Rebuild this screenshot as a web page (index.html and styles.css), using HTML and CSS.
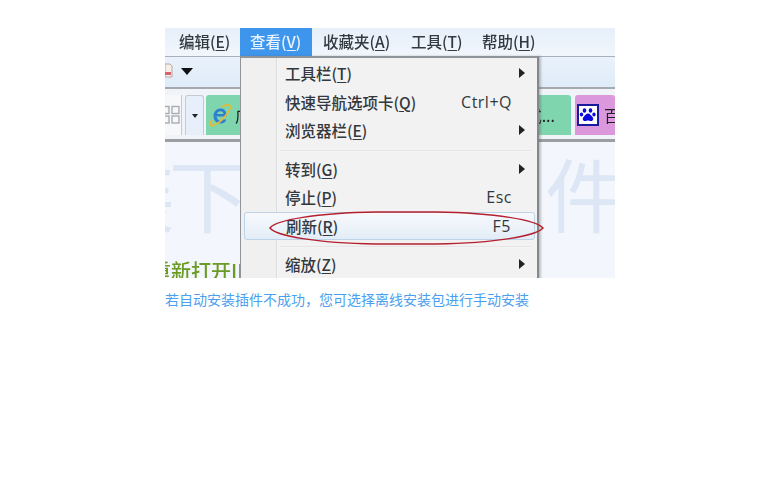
FILE: index.html
```html
<!DOCTYPE html>
<html lang="zh-CN">
<head>
<meta charset="utf-8">
<title>刷新</title>
<link rel="stylesheet" href="styles.css">
</head>
<body>
<main class="wrap">
  <figure class="shot">
    <div class="browser">
      <nav class="menubar">
        <span class="mi mi-edit">编辑(<u>E</u>)</span>
        <span class="mi mi-view">查看(<u>V</u>)</span>
        <span class="mi mi-fav">收藏夹(<u>A</u>)</span>
        <span class="mi mi-tools">工具(<u>T</u>)</span>
        <span class="mi mi-help">帮助(<u>H</u>)</span>
      </nav>
      <div class="toolbar">
        <svg class="printer" width="8" height="18" viewBox="0 0 8 18"><path d="M0 3h5l2 2v11H0z" fill="#f4efe9" stroke="#b9a7a0"/><path d="M0 11h6v3H0z" fill="#d9626f"/></svg>
        <span class="tool-arrow"></span>
      </div>
      <div class="tabbar">
        <div class="grid-btn"><svg width="15" height="20" viewBox="0 0 15 20"><g fill="none" stroke="#a9adb3" stroke-width="1.4"><rect x="-3" y="1.5" width="7" height="7"/><rect x="-3" y="11" width="7" height="7"/><rect x="7" y="1.5" width="7" height="7"/><rect x="7" y="11" width="7" height="7"/></g></svg></div>
        <div class="drop-btn"><span class="drop-arrow"></span></div>
        <div class="tab tab-green">
          <svg class="ie" width="23" height="24" viewBox="0 0 23 24"><path d="M5 13.500h12.500C18 8 15 5.500 11.500 5.500 7.500 5.500 4.500 9 4.500 13c0 4.500 3 7.500 7 7.500 3 0 5-1.500 6-4h-3.500c-.5 1-1.300 1.400-2.500 1.400-2 0-3.500-1.600-3.500-3.900zM8 11c.2-1.700 1.600-2.800 3.400-2.800 1.800 0 3 1.100 3.200 2.800z" fill="#2f7fd0"/><path d="M3 17C0 21 1 23 3.500 22.500c4-1 10-5.500 14-11C21 7 22.500 3 20 2c-2-.7-5 .5-7.500 2" fill="none" stroke="#e3b93a" stroke-width="1.800"/></svg>
          <span class="tab-text">广</span>
          <span class="tab-end">式...</span>
        </div>
        <div class="tab tab-purple">
          <svg class="paw" width="22" height="22" viewBox="0 0 22 22"><rect x="1" y="1" width="20" height="20" fill="#fff" stroke="#1a1a9c" stroke-width="2"/><g fill="#0a0ae0"><ellipse cx="7.500" cy="6.500" rx="1.800" ry="2.300"/><ellipse cx="13.500" cy="6.500" rx="1.800" ry="2.300"/><ellipse cx="4.500" cy="10.500" rx="1.700" ry="2"/><ellipse cx="17" cy="10.500" rx="1.700" ry="2"/><path d="M11 9.500c2 0 3 2 4.500 3.500 1.500 2 .5 4-1.500 4-1.200 0-2-.5-3-.5s-1.800.5-3 .5c-2 0-3-2-1.500-4C8 11.500 9 9.500 11 9.500z"/></g></svg>
          <span class="tab-text">百</span>
        </div>
      </div>
      <div class="page">
        <div class="watermark"><span class="wm-left">装下</span><span>件</span></div>
        <div class="reopen">重新打开IE</div>
      </div>
    </div>

    <div class="menu">
      <div class="row"><span>工具栏(<u>T</u>)</span><span></span><i class="sub"></i></div>
      <div class="row"><span>快速导航选项卡(<u>Q</u>)</span><span class="key">Ctrl+Q</span><span></span></div>
      <div class="row"><span>浏览器栏(<u>E</u>)</span><span></span><i class="sub"></i></div>
      <hr class="sep">
      <div class="row"><span>转到(<u>G</u>)</span><span></span><i class="sub"></i></div>
      <div class="row"><span>停止(<u>P</u>)</span><span class="key">Esc</span><span></span></div>
      <div class="row row-on"><span>刷新(<u>R</u>)</span><span class="key">F5</span><span></span></div>
      <hr class="sep sep-low">
      <div class="row"><span>缩放(<u>Z</u>)</span><span></span><i class="sub"></i></div>
    </div>

    <svg class="ring" width="282" height="40" viewBox="0 0 282 40"><path d="M4 20C10 12 50 5 110 4H170C230 5 270 12 277 20 270 28 230 35 170 36H110C50 35 10 28 4 20z" fill="none" stroke="#b3202e" stroke-width="1.500"/></svg>
  </figure>
  <p class="caption">若自动安装插件不成功，您可选择离线安装包进行手动安装</p>
</main>
</body>
</html>
```

FILE: styles.css
```css
* { box-sizing: border-box; }
html, body { margin: 0; padding: 0; background: #fff; }
body { font-family: "Noto Sans CJK SC", "Liberation Sans", sans-serif; }
.wrap { width: 450px; margin-left: 165px; padding-top: 28px; }

.shot { position: relative; width: 450px; height: 250px; margin: 0; overflow: hidden; }
.browser { width: 450px; height: 250px; display: flex; flex-direction: column; background: #f3f7fd; filter: blur(0.3px); }

.menubar {
  height: 29px; display: flex; align-items: center; font-size: 15.5px; font-weight: 500; color: #333a40;
  background: linear-gradient(#e6effa, #f1f6fc);
  border-bottom: 1px solid #a9b0b8;
}
.mi { height: 100%; display: flex; align-items: center; padding-bottom: 3px; white-space: pre; }
.mi u { text-underline-offset: 2px; }
.mi-edit { margin-left: 14px; width: 61px; }
.mi-view { width: 72px; padding-left: 10px; background: #3d95ec; color: #e8f3ff; }
.mi-fav { margin-left: 11px; width: 88px; }
.mi-tools { width: 71px; }
.mi-help { width: 60px; }

.toolbar {
  height: 32px; display: flex; align-items: center; gap: 8px;
  background: linear-gradient(#e9f2fc, #dfebf8);
  border-bottom: 2px solid #a6a9ad;
}
.printer { display: block; margin-top: -4px; }
.tool-arrow { margin-bottom: 1px; border: 6px solid transparent; border-top: 7px solid #111; border-bottom: 0; }

.tabbar {
  height: 50px; display: flex; align-items: stretch; padding: 6px 0 4px;
  background: #f0f4f9;
}
.grid-btn { width: 17px; margin-right: 3px; background: #f6f8fa; display: flex; align-items: center; border-right: 1px solid #c4cad0; }
.drop-btn { width: 19px; margin-right: 2px; background: #e7f0fa; display: flex; align-items: center; justify-content: center; border: 1px solid #c4cad0; border-bottom: 0; border-radius: 3px 3px 0 0; }
.drop-arrow { border: 3px solid transparent; border-top: 4px solid #222; border-bottom: 0; }
.tab { display: flex; align-items: center; border-radius: 3px 3px 0 0; font-size: 16px; color: #222; }
.tab-green { width: 365px; margin-right: 4px; padding: 0 16px 0 3px; background: #7fd5ad; }
.ie { display: block; flex: none; }
.tab-text { margin-left: 3px; }
.tab-end { margin-left: auto; }
.tab-purple { flex: 1; min-width: 0; padding-left: 2px; background: #dc98dd; white-space: nowrap; overflow: hidden; }
.paw { display: block; flex: none; margin-right: 2px; }

.page { flex: 1; min-height: 0; border-top: 3px solid #9c9ea1; background: #f3f7fd; overflow: hidden; }
.watermark {
  display: flex; justify-content: space-between; margin: 4px 0 0 -70px; width: 530px;
  font-size: 80px; line-height: 90px; height: 90px; color: #dde6f4;
}
.wm-left { letter-spacing: -6px; }
.reopen { margin: 23px 0 0 -14px; font-size: 20px; font-weight: 500; line-height: 24px; color: #6a9b24; white-space: nowrap; }

.menu {
  position: absolute; left: 75px; top: 28px; width: 299px; height: 260px;
  padding: 1px 2px 0 3px; font-size: 15.500px; font-weight: 500; color: #33383c;
  background: linear-gradient(90deg, #f0f0f0 35px, #dcdcdc 35px, #dcdcdc 36px, #fbfbfb 36px, #f2f2f2 37px);
  border: 1px solid #8f9498; border-top-width: 2px; border-right-width: 2px; border-right-color: #85888b;
  box-shadow: 2px 0 2px rgba(90, 90, 90, .35);
}
.row {
  height: 28.500px; display: grid; grid-template-columns: 1fr auto 8px; column-gap: 7px; align-items: center;
  padding: 0 8px 0 41px; white-space: pre;
}
.row u { text-underline-offset: 2px; }
.key { font-family: "Open Sans", "Noto Sans", sans-serif; font-size: 16px; font-weight: 400; letter-spacing: .5px; }
.sub { display: block; width: 0; height: 0; border: 5px solid transparent; border-left: 6px solid #222; border-right: 0; }
.row-on {
  background: linear-gradient(#f7f9fc, #e3edf7);
  border: 1px solid #bcd3ea; border-radius: 3px;
}
.sep { height: 2px; margin: 5px 3px 3px 36px; border: 0; background: linear-gradient(#dedede, #fbfbfb); }
.sep-low { margin: 6px 3px 2px 36px; }

.ring { position: absolute; left: 101px; top: 180px; display: block; }

.caption { margin: 13px 0 0; font-size: 14px; line-height: 17px; color: #4b9ff0; white-space: nowrap; }
```
